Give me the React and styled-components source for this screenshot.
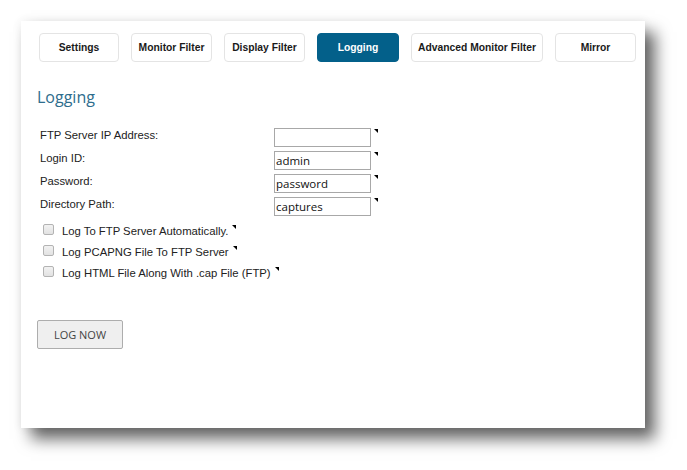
import React from "react";
import styled, { createGlobalStyle } from "styled-components";

const GlobalStyle = createGlobalStyle`
    body {
        margin: 0;
        background: #ffffff;
        font-family: "Liberation Sans", Arial, sans-serif;
    }
`;

const tabs = [
    { name: "Settings", width: 80 },
    { name: "Monitor Filter", width: 81 },
    { name: "Display Filter", width: 81 },
    { name: "Logging", width: 82, active: true },
    { name: "Advanced Monitor Filter", width: 132 },
    { name: "Mirror", width: 81 },
];

const fields = [
    { label: "FTP Server IP Address:", value: "" },
    { label: "Login ID:", value: "admin" },
    { label: "Password:", value: "password" },
    { label: "Directory Path:", value: "captures" },
];

const options = [
    "Log To FTP Server Automatically.",
    "Log PCAPNG File To FTP Server",
    "Log HTML File Along With .cap File (FTP)",
];

const App = () => {
    return (
        <Page>
            <GlobalStyle />
            <Panel>
                <TabBar>
                    {tabs.map((tab) => (
                        <Tab key={tab.name} $width={tab.width} $active={tab.active}>
                            {tab.name}
                        </Tab>
                    ))}
                </TabBar>
                <Heading>Logging</Heading>
                <Form>
                    {fields.map((field) => (
                        <FieldRow key={field.label}>
                            <Label>{field.label}</Label>
                            <Input defaultValue={field.value} />
                            <Marker />
                        </FieldRow>
                    ))}
                </Form>
                <Options>
                    {options.map((text) => (
                        <OptionRow key={text}>
                            <Check />
                            <OptionText>{text}</OptionText>
                            <Marker $inline />
                        </OptionRow>
                    ))}
                </Options>
                <LogButton>LOG NOW</LogButton>
            </Panel>
        </Page>
    );
};

const Page = styled.div`
    padding: 21px 0 0 21px;
    height: 470px;
    box-sizing: border-box;
`;

const Panel = styled.div`
    width: 624px;
    height: 407px;
    box-sizing: border-box;
    padding: 12px 0 0 18px;
    background: #ffffff;
    box-shadow: 0 0 10px rgba(0, 0, 0, 0.07), 10px 11px 15px rgba(0, 0, 0, 0.6);
`;

const TabBar = styled.div`
    display: flex;
    gap: 12px;
`;

const Tab = styled.div`
    width: ${(props) => props.$width}px;
    height: 29px;
    box-sizing: border-box;
    display: flex;
    align-items: center;
    justify-content: center;
    border: 1px solid ${(props) => (props.$active ? "#03608a" : "#e4e4e4")};
    border-radius: 4px;
    background: ${(props) => (props.$active ? "#03608a" : "#ffffff")};
    color: ${(props) => (props.$active ? "#ffffff" : "#1a1a1a")};
    font-size: 10.3px;
    font-weight: bold;
`;

const Heading = styled.h2`
    margin: 24px 0 0 -2px;
    font-family: "Open Sans", sans-serif;
    font-size: 16px;
    font-weight: 400;
    line-height: 22px;
    color: #2e6d8d;
`;

const Form = styled.div`
    margin-top: 20px;
    display: flex;
    flex-direction: column;
    gap: 4px;
`;

const FieldRow = styled.div`
    display: flex;
    align-items: flex-start;
    height: 19px;
`;

const Label = styled.span`
    width: 235px;
    padding-left: 1px;
    box-sizing: border-box;
    font-size: 11.3px;
    line-height: 14px;
    color: #222222;
`;

const Input = styled.input`
    width: 97px;
    height: 19px;
    box-sizing: border-box;
    margin: 0;
    padding: 0 1px;
    border: 1px solid #a8a8a8;
    border-radius: 0;
    font-family: "Open Sans", sans-serif;
    font-size: 11.5px;
    color: #111111;
    outline: none;
`;

const Marker = styled.span`
    width: 0;
    height: 0;
    margin: ${(props) => (props.$inline ? "4px 0 0 4px" : "1px 0 0 3px")};
    border-top: 4px solid #000000;
    border-left: 4px solid transparent;
    align-self: flex-start;
`;

const Options = styled.div`
    margin: 5px 0 0 4px;
    display: flex;
    flex-direction: column;
    gap: 1px;
`;

const OptionRow = styled.div`
    display: flex;
    align-items: center;
    height: 20px;
`;

const Check = styled.span`
    width: 11px;
    height: 11px;
    box-sizing: border-box;
    margin-right: 8px;
    margin-top: -3px;
    border: 1px solid #b3b3b3;
    border-radius: 2px;
    background: linear-gradient(#f2f2f2, #e2e2e2);
`;

const OptionText = styled.span`
    font-size: 11.3px;
    line-height: 20px;
    color: #222222;
`;

const LogButton = styled.button`
    margin: 37px 0 0 -2px;
    width: 86px;
    height: 29px;
    box-sizing: border-box;
    border: 1px solid #adadad;
    border-radius: 2px;
    background: #efefef;
    font-family: "Open Sans", sans-serif;
    font-size: 11px;
    color: #444444;
    padding: 0;
`;

export default App;
